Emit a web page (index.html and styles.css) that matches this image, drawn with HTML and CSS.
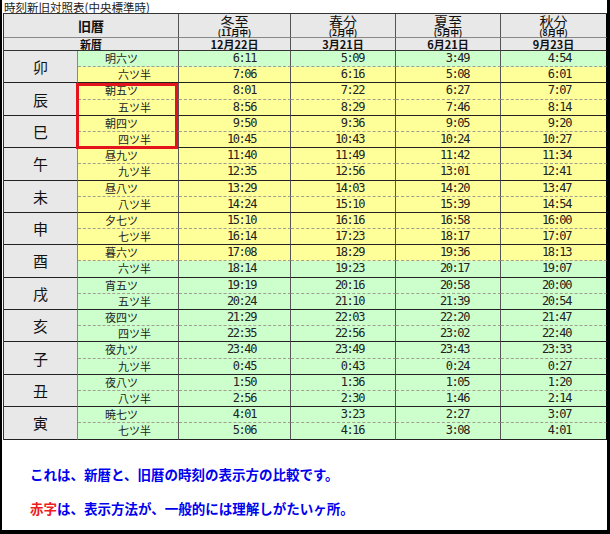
FILE: index.html
```html
<!DOCTYPE html>
<html lang="ja">
<head>
<meta charset="utf-8">
<title>時刻新旧対照表</title>
<link rel="stylesheet" href="styles.css">
</head>
<body>
<div class="frame">
  <div class="title">時刻新旧対照表(中央標準時)</div>
  <div class="grid">
    <div class="hd old">旧暦</div>
    <div class="hd season"><span class="sn">冬至</span><span class="sm">(11月中)</span></div>
    <div class="hd season"><span class="sn">春分</span><span class="sm">(2月中)</span></div>
    <div class="hd season"><span class="sn">夏至</span><span class="sm">(5月中)</span></div>
    <div class="hd season last"><span class="sn">秋分</span><span class="sm">(8月中)</span></div>
    <div class="hd new">新暦</div>
    <div class="hd date">12月22日</div>
    <div class="hd date">3月21日</div>
    <div class="hd date">6月21日</div>
    <div class="hd date last">9月23日</div>

    <div class="eto">卯</div>
    <div class="nm a g">明六ツ</div><div class="t a g c1">6:11</div><div class="t a g c2">5:09</div><div class="t a g c3">3:49</div><div class="t a g c4">4:54</div>
    <div class="nm b y">六ツ半</div><div class="t b y c1">7:06</div><div class="t b y c2">6:16</div><div class="t b y c3">5:08</div><div class="t b y c4">6:01</div>

    <div class="eto">辰</div>
    <div class="nm a y">朝五ツ</div><div class="t a y c1">8:01</div><div class="t a y c2">7:22</div><div class="t a y c3">6:27</div><div class="t a y c4">7:07</div>
    <div class="nm b y">五ツ半</div><div class="t b y c1">8:56</div><div class="t b y c2">8:29</div><div class="t b y c3">7:46</div><div class="t b y c4">8:14</div>

    <div class="eto">巳</div>
    <div class="nm a y">朝四ツ</div><div class="t a y c1">9:50</div><div class="t a y c2">9:36</div><div class="t a y c3">9:05</div><div class="t a y c4">9:20</div>
    <div class="nm b y">四ツ半</div><div class="t b y c1">10:45</div><div class="t b y c2">10:43</div><div class="t b y c3">10:24</div><div class="t b y c4">10:27</div>

    <div class="eto">午</div>
    <div class="nm a y">昼九ツ</div><div class="t a y c1">11:40</div><div class="t a y c2">11:49</div><div class="t a y c3">11:42</div><div class="t a y c4">11:34</div>
    <div class="nm b y">九ツ半</div><div class="t b y c1">12:35</div><div class="t b y c2">12:56</div><div class="t b y c3">13:01</div><div class="t b y c4">12:41</div>

    <div class="eto">未</div>
    <div class="nm a y">昼八ツ</div><div class="t a y c1">13:29</div><div class="t a y c2">14:03</div><div class="t a y c3">14:20</div><div class="t a y c4">13:47</div>
    <div class="nm b y">八ツ半</div><div class="t b y c1">14:24</div><div class="t b y c2">15:10</div><div class="t b y c3">15:39</div><div class="t b y c4">14:54</div>

    <div class="eto">申</div>
    <div class="nm a y">夕七ツ</div><div class="t a y c1">15:10</div><div class="t a y c2">16:16</div><div class="t a y c3">16:58</div><div class="t a y c4">16:00</div>
    <div class="nm b y">七ツ半</div><div class="t b y c1">16:14</div><div class="t b y c2">17:23</div><div class="t b y c3">18:17</div><div class="t b y c4">17:07</div>

    <div class="eto">酉</div>
    <div class="nm a y">暮六ツ</div><div class="t a y c1">17:08</div><div class="t a y c2">18:29</div><div class="t a y c3">19:36</div><div class="t a y c4">18:13</div>
    <div class="nm b g">六ツ半</div><div class="t b g c1">18:14</div><div class="t b g c2">19:23</div><div class="t b g c3">20:17</div><div class="t b g c4">19:07</div>

    <div class="eto">戌</div>
    <div class="nm a g">宵五ツ</div><div class="t a g c1">19:19</div><div class="t a g c2">20:16</div><div class="t a g c3">20:58</div><div class="t a g c4">20:00</div>
    <div class="nm b g">五ツ半</div><div class="t b g c1">20:24</div><div class="t b g c2">21:10</div><div class="t b g c3">21:39</div><div class="t b g c4">20:54</div>

    <div class="eto">亥</div>
    <div class="nm a g">夜四ツ</div><div class="t a g c1">21:29</div><div class="t a g c2">22:03</div><div class="t a g c3">22:20</div><div class="t a g c4">21:47</div>
    <div class="nm b g">四ツ半</div><div class="t b g c1">22:35</div><div class="t b g c2">22:56</div><div class="t b g c3">23:02</div><div class="t b g c4">22:40</div>

    <div class="eto">子</div>
    <div class="nm a g">夜九ツ</div><div class="t a g c1">23:40</div><div class="t a g c2">23:49</div><div class="t a g c3">23:43</div><div class="t a g c4">23:33</div>
    <div class="nm b g">九ツ半</div><div class="t b g c1">0:45</div><div class="t b g c2">0:43</div><div class="t b g c3">0:24</div><div class="t b g c4">0:27</div>

    <div class="eto">丑</div>
    <div class="nm a g">夜八ツ</div><div class="t a g c1">1:50</div><div class="t a g c2">1:36</div><div class="t a g c3">1:05</div><div class="t a g c4">1:20</div>
    <div class="nm b g">八ツ半</div><div class="t b g c1">2:56</div><div class="t b g c2">2:30</div><div class="t b g c3">1:46</div><div class="t b g c4">2:14</div>

    <div class="eto">寅</div>
    <div class="nm a g">暁七ツ</div><div class="t a g c1">4:01</div><div class="t a g c2">3:23</div><div class="t a g c3">2:27</div><div class="t a g c4">3:07</div>
    <div class="nm b g">七ツ半</div><div class="t b g c1">5:06</div><div class="t b g c2">4:16</div><div class="t b g c3">3:08</div><div class="t b g c4">4:01</div>

    <div class="mark"></div>
  </div>
  <div class="notes">
    <p class="note">これは、新暦と、旧暦の時刻の表示方の比較です。</p>
    <p class="note"><span class="red">赤字</span>は、表示方法が、一般的には理解しがたいヶ所。</p>
  </div>
</div>
</body>
</html>
```
FILE: styles.css
```css
html, body {
  margin: 0;
  padding: 0;
  background: #fff;
}

.frame {
  width: 610px;
  height: 534px;
  box-sizing: border-box;
  border-left: 2px solid #000;
  border-right: 3px solid #000;
  border-bottom: 4px solid #000;
  background: #fff;
  font-family: "Noto Sans CJK JP", sans-serif;
  color: #111;
}

.title {
  height: 13px;
  padding-left: 2px;
  font-size: 11.5px;
  line-height: 14px;
  color: #222;
  white-space: nowrap;
}

.grid {
  position: relative;
  margin-left: 1px;
  width: 604px;
  box-sizing: border-box;
  border-top: 1px solid #333;
  border-left: 1px solid #333;
  display: grid;
  grid-template-columns: 74px 101px 112px 105px 105px 106px;
  grid-template-rows: 24px 13px repeat(24, 16.2px);
}

.grid > div {
  box-sizing: border-box;
  min-width: 0;
  min-height: 0;
}

.hd {
  background: #e8e8e8;
  border-right: 1px solid #555;
  border-bottom: 1px solid #888;
  display: flex;
  align-items: center;
  justify-content: center;
  color: #111;
}

.hd.last {
  border-right-color: #000;
}

.old {
  grid-column: span 2;
  font-size: 13px;
  font-weight: bold;
}

.new {
  grid-column: span 2;
  font-size: 11px;
  font-weight: bold;
  border-bottom-color: #333;
}

.season {
  flex-direction: column;
  justify-content: flex-start;
  padding-top: 1px;
}

.sn {
  display: block;
  font-size: 14px;
  line-height: 13px;
  height: 13px;
}

.sm {
  display: block;
  font-size: 8.5px;
  font-weight: bold;
  line-height: 9px;
  height: 9px;
}

.date {
  font-size: 11px;
  font-weight: bold;
  border-bottom-color: #333;
}

.eto {
  grid-row: span 2;
  background: #e8e8e8;
  border-right: 1px solid #888;
  border-bottom: 1px solid #222;
  display: flex;
  align-items: center;
  justify-content: center;
  font-size: 15px;
  color: #111;
}

.g {
  background: #ccffcc;
}

.y {
  background: #ffff99;
}

.a {
  border-bottom: 1px dashed #a0a090;
}

.b {
  border-bottom: 1px solid #222;
}

.nm {
  border-right: 1px solid #555;
  font-size: 11px;
  line-height: 15px;
  white-space: nowrap;
  color: #222;
}

.nm.a {
  padding-left: 27px;
}

.nm.b {
  padding-left: 40px;
}

.t {
  border-right: 1px solid #555;
  text-align: right;
  font-family: "DejaVu Sans Mono", monospace;
  font-size: 12px;
  letter-spacing: -1.4px;
  line-height: 15px;
  color: #222;
  white-space: nowrap;
}

.c1 { padding-right: 34px; }
.c2 { padding-right: 31px; }
.c3 { padding-right: 31px; }
.c4 { padding-right: 35px; border-right-color: #000; }

.mark {
  position: absolute;
  grid-column: 2 / 3;
  grid-row: 5 / 9;
  top: 0;
  bottom: -1px;
  left: -2px;
  right: 1px;
  border: 3px solid #e3141c;
  pointer-events: none;
}

.notes {
  padding-left: 28px;
  padding-top: 24px;
}

.note {
  margin: 0 0 14px 0;
  font-size: 13.5px;
  line-height: 20px;
  font-weight: bold;
  color: #0000ee;
  white-space: nowrap;
}

.red {
  color: #ee1c24;
}
```
